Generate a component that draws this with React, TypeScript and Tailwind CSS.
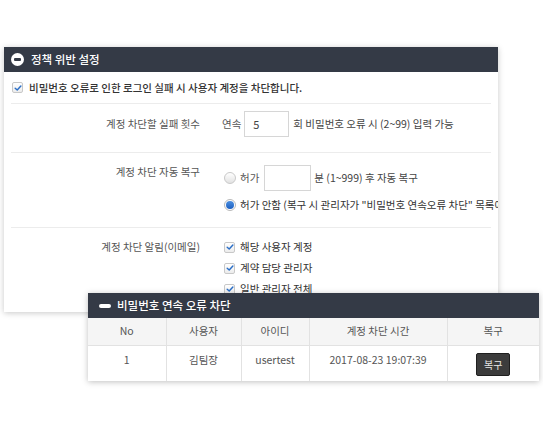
import React from 'react';

const font = { fontFamily: '"Noto Sans CJK KR", "Noto Sans", sans-serif' };

function Check() {
  return (
    <span className="inline-flex h-[11px] w-[11px] shrink-0 items-center justify-center rounded-[2px] border border-[#c8c8c8] bg-gradient-to-b from-white to-[#ececec]">
      <svg viewBox="0 0 10 10" className="h-[8px] w-[8px]">
        <path d="M1.5 5.2 L4 7.5 L8.6 2.4" fill="none" stroke="#2b6fc7" strokeWidth="1.8" strokeLinecap="round" strokeLinejoin="round" />
      </svg>
    </span>
  );
}

function Radio({ on }: { on?: boolean }) {
  return (
    <span
      className={
        'inline-flex h-[12px] w-[12px] shrink-0 items-center justify-center rounded-full border ' +
        (on ? 'border-[#b9b9b9] bg-white' : 'border-[#c9c9c9] bg-gradient-to-b from-white to-[#e2e2e2]')
      }
    >
      {on && <span className="h-[8px] w-[8px] rounded-full bg-gradient-to-b from-[#4c8fe0] to-[#1c5fc0]" />}
    </span>
  );
}

export default function App() {
  return (
    <div className="relative h-[430px] w-[543px] overflow-hidden bg-white" style={font}>
      {/* 정책 위반 설정 */}
      <div className="absolute left-[4px] top-[47px] h-[265px] w-[494px] overflow-hidden bg-white shadow-[0_1px_6px_rgba(0,0,0,0.22)]">
        <div className="flex h-[25px] items-center gap-[7px] bg-[#343a46] px-[7px] text-[11.5px] font-medium text-white">
          <span className="flex h-[13px] w-[13px] items-center justify-center rounded-full bg-white">
            <span className="h-[3px] w-[7px] rounded-[1px] bg-[#343a46]" />
          </span>
          정책 위반 설정
        </div>
        <div className="px-[7px]">
          <div className="flex h-[32px] items-center gap-[6px] border-b border-[#ececec] pl-[1px] text-[10.5px] font-medium text-[#333]">
            <Check />
            <span className="whitespace-nowrap">비밀번호 오류로 인한 로그인 실패 시 사용자 계정을 차단합니다.</span>
          </div>

          <div className="flex h-[49px] border-b border-[#ececec] text-[10.5px] text-[#555]">
            <div className="w-[189px] shrink-0 pt-[13px] text-right leading-[14px]">계정 차단할 실패 횟수</div>
            <div className="ml-[22px] flex items-start pt-[7px] whitespace-nowrap">
              <span className="leading-[26px]">연속</span>
              <span className="ml-[3px] h-[26px] w-[45px] border border-[#d6d6d6] pl-[8px] text-[11px] leading-[24px] text-[#444]">5</span>
              <span className="ml-[4px] leading-[26px] text-[#444]">회 비밀번호 오류 시 (2~99) 입력 가능</span>
            </div>
          </div>

          <div className="flex h-[75px] border-b border-[#ececec] text-[10.5px] text-[#555]">
            <div className="w-[189px] shrink-0 pt-[12px] text-right leading-[14px]">계정 차단 자동 복구</div>
            <div className="ml-[24px] flex min-w-0 flex-col pt-[12px] whitespace-nowrap">
              <div className="flex items-center">
                <Radio />
                <span className="ml-[4px] leading-[26px]">허가</span>
                <span className="ml-[5px] h-[26px] w-[47px] border border-[#d6d6d6]" />
                <span className="ml-[3px] text-[#444]">분 (1~999) 후 자동 복구</span>
              </div>
              <div className="mt-[2px] flex items-center">
                <Radio on />
                <span className="ml-[4px] leading-[24px] text-[#333]">허가 안함 (복구 시 관리자가 "비밀번호 연속오류 차단" 목록에</span>
              </div>
            </div>
          </div>

          <div className="flex text-[10.5px] text-[#555]">
            <div className="w-[189px] shrink-0 pt-[12px] text-right leading-[14px]">계정 차단 알림(이메일)</div>
            <div className="ml-[24px] flex flex-col gap-[7px] pt-[12px] whitespace-nowrap text-[#333]">
              {['해당 사용자 계정', '계약 담당 관리자', '일반 관리자 전체'].map((t) => (
                <div key={t} className="flex h-[14px] items-center gap-[5px]">
                  <Check />
                  <span className="leading-[14px]">{t}</span>
                </div>
              ))}
            </div>
          </div>
        </div>
      </div>

      {/* 비밀번호 연속 오류 차단 */}
      <div className="absolute left-[88px] top-[293px] w-[451px] bg-white shadow-[0_1px_6px_rgba(0,0,0,0.25)]">
        <div className="flex h-[25px] items-center gap-[6px] bg-[#343a46] px-[11px] text-[11.5px] font-medium text-white">
          <span className="h-[4px] w-[12px] rounded-full bg-white" />
          비밀번호 연속 오류 차단
        </div>
        <table className="w-full table-fixed border-collapse text-[10.5px] text-[#555]">
          <colgroup>
            <col className="w-[78px]" />
            <col className="w-[75px]" />
            <col className="w-[68px]" />
            <col className="w-[138px]" />
            <col />
          </colgroup>
          <thead>
            <tr className="h-[27px] bg-[#f5f5f5]">
              {['No', '사용자', '아이디', '계정 차단 시간', '복구'].map((h, i) => (
                <th
                  key={h}
                  className={'border-b border-[#e2e2e2] font-normal ' + (i < 4 ? 'border-r border-r-[#e2e2e2]' : '')}
                >
                  {h}
                </th>
              ))}
            </tr>
          </thead>
          <tbody>
            <tr className="h-[36px]">
              {['1', '김팀장', 'usertest', '2017-08-23 19:07:39'].map((c) => (
                <td key={c} className="border-r border-[#e2e2e2] pt-[7px] text-center align-top leading-[14px]">
                  {c}
                </td>
              ))}
              <td className="pt-[7px] text-center align-top">
                <button className="h-[23px] w-[34px] rounded-[2px] border border-[#1f1f1f] bg-[#3c3c3c] text-[10px] text-[#e8e8e8]">
                  복구
                </button>
              </td>
            </tr>
          </tbody>
        </table>
      </div>
    </div>
  );
}
